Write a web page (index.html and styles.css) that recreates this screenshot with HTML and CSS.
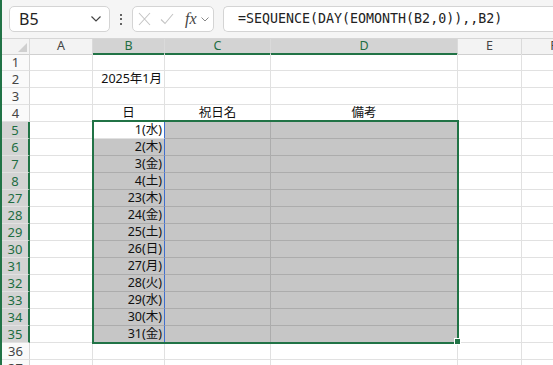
FILE: index.html
```
<!DOCTYPE html>
<html lang="ja">
<head>
    <meta charset="UTF-8">
    <title>Book1 - Excel</title>
    <link rel="stylesheet" href="styles.css">
</head>
<body>

<div class="toolbar">
    <div class="namebox">
        <span>B5</span>
        <svg class="chev" width="10" height="6" viewBox="0 0 10 6"><polyline points="0.5,0.5 5,5 9.5,0.5" fill="none" stroke="#444" stroke-width="1.2"/></svg>
    </div>
    <div class="dots"><i></i><i></i><i></i></div>
    <div class="fxbox">
        <svg width="13" height="14" viewBox="0 0 13 14"><path d="M1 1 L12 13 M12 1 L1 13" stroke="#c4c4c4" stroke-width="1.1" fill="none"/></svg>
        <svg width="14" height="12" viewBox="0 0 14 12"><polyline points="1,6.5 5,10.5 13,1" stroke="#c4c4c4" stroke-width="1.1" fill="none"/></svg>
        <span class="fx">fx</span>
        <svg width="8" height="5" viewBox="0 0 8 5"><polyline points="0.5,0.5 4,4 7.5,0.5" fill="none" stroke="#888" stroke-width="1"/></svg>
    </div>
    <div class="formula">=SEQUENCE(DAY(EOMONTH(B2,0)),,B2)</div>
</div>

<div class="sheet">
    <div class="row head">
        <div class="corner"><b></b></div>
        <div class="ch">A</div>
        <div class="ch on">B</div>
        <div class="ch on">C</div>
        <div class="ch on">D</div>
        <div class="ch">E</div>
        <div class="ch">F</div>
    </div>
    <div class="row"><div class="rh">1</div><div class="c"></div><div class="c"></div><div class="c"></div><div class="c"></div><div class="c"></div><div class="c"></div></div>
    <div class="row"><div class="rh">2</div><div class="c"></div><div class="c num">2025年1月</div><div class="c"></div><div class="c"></div><div class="c"></div><div class="c"></div></div>
    <div class="row"><div class="rh">3</div><div class="c"></div><div class="c"></div><div class="c"></div><div class="c"></div><div class="c"></div><div class="c"></div></div>
    <div class="row"><div class="rh">4</div><div class="c"></div><div class="c mid">日</div><div class="c mid">祝日名</div><div class="c mid">備考</div><div class="c"></div><div class="c"></div></div>
    <div class="row"><div class="rh on">5</div><div class="c"></div><div class="c num bl">1(水)</div><div class="c s"></div><div class="c s"></div><div class="c"></div><div class="c"></div></div>
    <div class="row"><div class="rh on">6</div><div class="c"></div><div class="c s num bl">2(木)</div><div class="c s"></div><div class="c s"></div><div class="c"></div><div class="c"></div></div>
    <div class="row"><div class="rh on">7</div><div class="c"></div><div class="c s num bl">3(金)</div><div class="c s"></div><div class="c s"></div><div class="c"></div><div class="c"></div></div>
    <div class="row"><div class="rh on">8</div><div class="c"></div><div class="c s num bl">4(土)</div><div class="c s"></div><div class="c s"></div><div class="c"></div><div class="c"></div></div>
    <div class="row"><div class="rh on">27</div><div class="c"></div><div class="c s num bl">23(木)</div><div class="c s"></div><div class="c s"></div><div class="c"></div><div class="c"></div></div>
    <div class="row"><div class="rh on">28</div><div class="c"></div><div class="c s num bl">24(金)</div><div class="c s"></div><div class="c s"></div><div class="c"></div><div class="c"></div></div>
    <div class="row"><div class="rh on">29</div><div class="c"></div><div class="c s num bl">25(土)</div><div class="c s"></div><div class="c s"></div><div class="c"></div><div class="c"></div></div>
    <div class="row"><div class="rh on">30</div><div class="c"></div><div class="c s num bl">26(日)</div><div class="c s"></div><div class="c s"></div><div class="c"></div><div class="c"></div></div>
    <div class="row"><div class="rh on">31</div><div class="c"></div><div class="c s num bl">27(月)</div><div class="c s"></div><div class="c s"></div><div class="c"></div><div class="c"></div></div>
    <div class="row"><div class="rh on">32</div><div class="c"></div><div class="c s num bl">28(火)</div><div class="c s"></div><div class="c s"></div><div class="c"></div><div class="c"></div></div>
    <div class="row"><div class="rh on">33</div><div class="c"></div><div class="c s num bl">29(水)</div><div class="c s"></div><div class="c s"></div><div class="c"></div><div class="c"></div></div>
    <div class="row"><div class="rh on">34</div><div class="c"></div><div class="c s num bl">30(木)</div><div class="c s"></div><div class="c s"></div><div class="c"></div><div class="c"></div></div>
    <div class="row"><div class="rh on">35</div><div class="c"></div><div class="c s num bl">31(金)</div><div class="c s"></div><div class="c s"></div><div class="c"></div><div class="c"></div></div>
    <div class="row"><div class="rh">36</div><div class="c"></div><div class="c"></div><div class="c"></div><div class="c"></div><div class="c"></div><div class="c"></div></div>
    <div class="row"><div class="rh">37</div><div class="c"></div><div class="c"></div><div class="c"></div><div class="c"></div><div class="c"></div><div class="c"></div></div>

    <!-- selection B5:D35 -->
    <div class="selection"></div>
    <div class="handle"></div>
</div>

</body>
</html>
```

FILE: styles.css
```
body, html {
    margin: 0;
    padding: 0;
    height: 100%;
    overflow: hidden;
}
body {
    background: #fff;
    border-left: 2px solid #217346;
    font-family: "Noto Sans", "Noto Sans CJK JP", sans-serif;
    color: #222;
}
.toolbar {
    height: 38px;
    background: #f5f5f5;
    border-bottom: 1px solid #d6d6d6;
    display: flex;
    align-items: center;
    padding-left: 7px;
}
.namebox {
    width: 101px;
    height: 26px;
    box-sizing: border-box;
    background: #fff;
    border: 1px solid #d4d4d4;
    border-radius: 5px;
    display: flex;
    align-items: center;
    justify-content: space-between;
    padding: 0 8px 0 9px;
    font-size: 16px;
    color: #222;
}
.dots {
    width: 22px;
    display: flex;
    flex-direction: column;
    align-items: center;
    gap: 2.5px;
}
.dots i {
    width: 2px;
    height: 2px;
    background: #333;
    border-radius: 1px;
}
.fxbox {
    width: 82px;
    height: 26px;
    box-sizing: border-box;
    background: #fff;
    border: 1px solid #d4d4d4;
    border-radius: 5px;
    display: flex;
    align-items: center;
    padding-left: 5px;
    gap: 9px;
}
.fxbox .fx {
    font-family: "Liberation Serif", serif;
    font-style: italic;
    font-size: 16px;
    color: #444;
    margin-left: 2px;
    margin-right: -5px;
}
.formula {
    flex: 1;
    height: 26px;
    margin-left: 9px;
    box-sizing: border-box;
    background: #fff;
    border: 1px solid #d4d4d4;
    border-right: none;
    border-radius: 5px 0 0 5px;
    padding-left: 14px;
    font-family: "DejaVu Sans Mono", monospace;
    font-size: 13.3px;
    line-height: 24px;
    color: #222;
    white-space: nowrap;
}

.sheet {
    position: relative;
    width: 620px;
}
.row {
    display: grid;
    grid-template-columns: 28px 63px 72px 106px 187px 64px 64px;
    height: 17px;
}
.row > div {
    box-sizing: border-box;
    border-right: 1px solid #e1e1e1;
    border-bottom: 1px solid #e1e1e1;
    font-size: 12.5px;
    line-height: 16px;
    white-space: nowrap;
    overflow: hidden;
}
.row.head {
    height: 15px;
}
.row.head > div {
    background: #f3f3f3;
    border-right-color: #dadada;
    border-bottom-color: #d0d0d0;
    text-align: center;
    line-height: 14px;
    color: #444;
    font-size: 12.5px;
    overflow: visible;
}
.row.head .ch.on {
    background: #d3d3d3;
    color: #1e6d42;
    border-bottom: 2px solid #217346;
}
.corner {
    position: relative;
}
.corner b {
    position: absolute;
    right: 2px;
    bottom: 2px;
    width: 0;
    height: 0;
    border-left: 9px solid transparent;
    border-bottom: 9px solid #cfcfcf;
}
.rh {
    background: #fafafa;
    text-align: center;
    color: #444;
    font-size: 13px !important;
    border-right-color: #d6d6d6 !important;
}
.rh.on {
    background: #d3d3d3;
    color: #1e6d42;
    border-right: 2px solid #217346 !important;
}
.c.num {
    text-align: right;
    padding-right: 2px;
    color: #111;
}
.c.mid {
    text-align: center;
    color: #111;
}
.c.s {
    background: #c6c6c6;
    border-color: #acacac;
}
.c.bl {
    border-right-color: #3f6fcf;
}

.selection {
    position: absolute;
    left: 90px;
    top: 81px;
    width: 367px;
    height: 224px;
    box-sizing: border-box;
    border: 2px solid #217346;
    pointer-events: none;
}
.handle {
    position: absolute;
    left: 452px;
    top: 299px;
    width: 7px;
    height: 7px;
    box-sizing: border-box;
    background: #217346;
    border: 1px solid #fff;
}
```
